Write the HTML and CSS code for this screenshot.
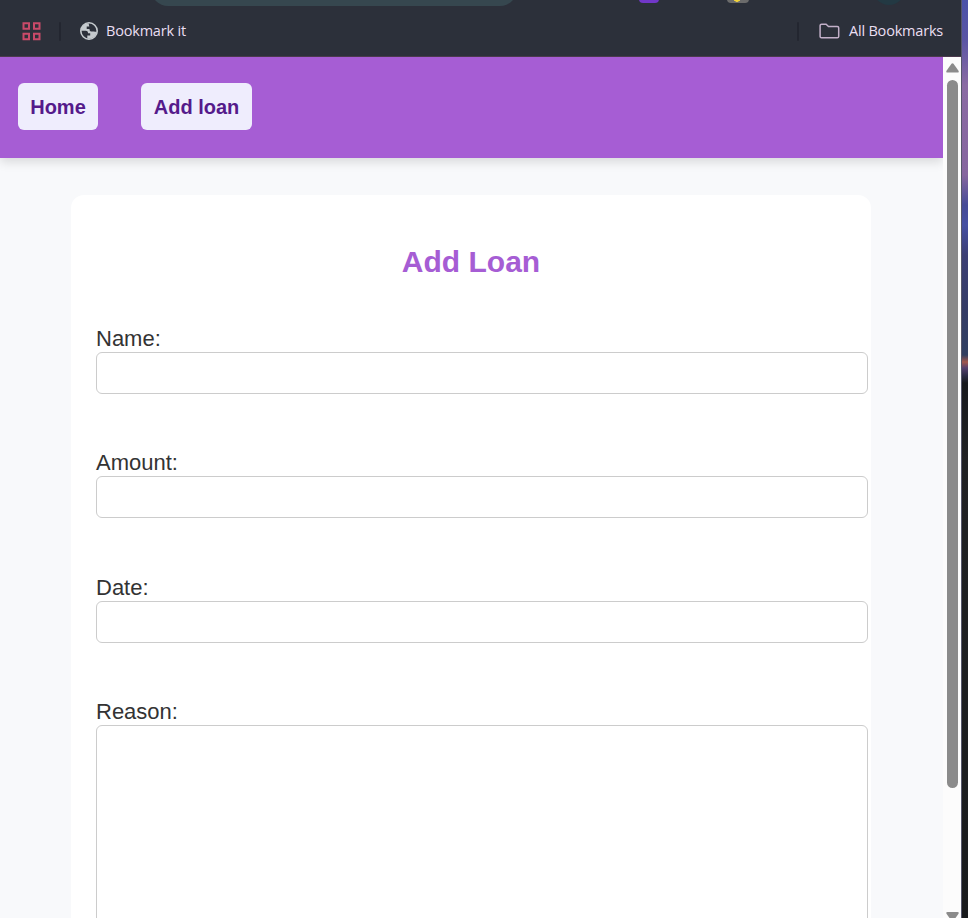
FILE: index.html
```html
<!DOCTYPE html>
<html lang="en">
<head>
<meta charset="utf-8">
<title>Add Loan</title>
<link rel="stylesheet" href="styles.css">
</head>
<body>
<div class="desktop">
  <div class="window">
    <div class="bookmarks">
      <span class="omnibox"></span>
      <span class="ext ext-purple"></span>
      <span class="ext ext-gray"></span>
      <span class="ext ext-teal"></span>
      <svg class="apps" width="20" height="20" viewBox="0 0 20 20" fill="none" stroke="#c94a69" stroke-width="2"><path d="M1.500 2.200h5.500v5.500H1.500zM12 2.200h5.500v5.500h-5.500zM1.500 12.700h5.500v5.500H1.500zM12 12.700h5.500v5.500h-5.500z"/></svg>
      <span class="divider"></span>
      <svg class="globe" width="18" height="18" viewBox="0 0 18 18"><circle cx="9" cy="9" r="8.2" fill="#2c303a" stroke="#c5cace" stroke-width="1.6"/><path fill="#c5cace" d="M8.6 1.2C4.4 1.2 1.2 4.600 1.200 8.800h4.500c1.900 0 2.300 1.400 2.300 2.400h2.200v2.400H7.300v2.900c5.300 1.200 9.300-2.700 9.400-6.900-1.200.5-1.700-.2-2.700-.2h-2.800c-1.200 0-1.700-1-1.700-2.500H6.700V4.600h2.600z"/></svg>
      <span class="bm-text">Bookmark it</span>
      <span class="divider divider-end"></span>
      <svg class="folder" width="21" height="16" viewBox="0 0 21 16" fill="none" stroke="#c3b0c9" stroke-width="1.500"><path d="M2.600 1.300h4.500l2.400 2.200h8.700c1 0 1.500.5 1.500 1.300v8.600c0 .9-.5 1.300-1.400 1.300H2.500c-.9 0-1.400-.4-1.400-1.300V2.600c0-.9.5-1.300 1.500-1.300z"/></svg>
      <span class="bm-text bm-all">All Bookmarks</span>
    </div>
    <div class="viewport">
      <div class="page">
        <nav class="nav">
          <a class="nav-link">Home</a>
          <a class="nav-link nav-add">Add loan</a>
        </nav>
        <main class="card">
          <h1 class="title">Add Loan</h1>
          <form class="form">
            <div class="field"><label class="label" for="name">Name:</label><input class="input" id="name"></div>
            <div class="field"><label class="label" for="amount">Amount:</label><input class="input" id="amount"></div>
            <div class="field"><label class="label" for="date">Date:</label><input class="input" id="date"></div>
            <div class="field"><label class="label" for="reason">Reason:</label><textarea class="input reason" id="reason"></textarea></div>
          </form>
        </main>
      </div>
      <div class="scrollbar">
        <svg class="arrow" width="13" height="10" viewBox="0 0 13 10"><path fill="#8b8b8b" d="M5.500.7q1-1.100 2 0l5 7q.8 1.800-1 1.800h-10Q-.3 9.500.5 7.700z"/></svg>
        <span class="thumb"></span>
        <svg class="arrow" width="13" height="10" viewBox="0 0 13 10"><path fill="#8b8b8b" d="M5.500 8.800q1 1.100 2 0l5-7Q13.300 0 11.500 0h-10Q-.3 0 .5 1.800z"/></svg>
      </div>
    </div>
  </div>
  <div class="wallpaper"></div>
</div>
</body>
</html>
```
FILE: styles.css
```css
body {
  margin: 0;
  overflow: hidden;
  font-family: "Liberation Sans", Arial, sans-serif;
}

.desktop {
  display: grid;
  grid-template-columns: 961px 7px;
  height: 918px;
  overflow: hidden;
}

.window {
  display: flex;
  flex-direction: column;
  height: 918px;
  overflow: hidden;
}

/* Browser chrome */
.bookmarks {
  position: relative;
  display: flex;
  align-items: center;
  flex: none;
  box-sizing: border-box;
  height: 57px;
  padding: 6px 18px 0 22px;
  border-bottom: 1px solid #4b3a4d;
  background: #2c303a;
  overflow: hidden;
}

.omnibox {
  position: absolute;
  top: -28px;
  left: 151px;
  width: 366px;
  height: 34px;
  border-radius: 17px;
  background: #36474f;
}

.ext {
  position: absolute;
  top: -17px;
  height: 20px;
  border-radius: 4px;
}

.ext-purple {
  left: 639px;
  width: 20px;
  background: #7137c8;
}

.ext-gray {
  left: 727px;
  width: 22px;
  background: radial-gradient(circle at 10px 15px, #f2d43c 3.500px, #6b6b6b 4px);
}

.ext-teal {
  top: -27px;
  left: 873px;
  width: 32px;
  height: 32px;
  border-radius: 50%;
  background: #233943;
}

.divider {
  width: 2px;
  height: 19px;
  margin: 0 19px 0 17px;
  border-radius: 1px;
  background: #232630;
}

.divider-end {
  margin: 0 20px 0 auto;
}

.globe {
  margin-right: 8px;
}

.folder {
  margin-right: 9px;
}

.bm-text {
  width: 80px;
  color: #eadff2;
  font: 14.500px/20px "Open Sans", "Noto Sans", sans-serif;
  letter-spacing: -0.200px;
  white-space: nowrap;
}

.bm-all {
  width: 94px;
}

/* Page */
.viewport {
  display: grid;
  grid-template-columns: 943px 18px;
  height: 861px;
}

.page {
  height: 861px;
  overflow: hidden;
  background: #f8f9fb;
}

.nav {
  display: flex;
  gap: 43px;
  box-sizing: border-box;
  height: 101px;
  padding: 26px 18px;
  background: #a65dd4;
  box-shadow: 0 4px 10px rgba(0, 0, 0, 0.130);
}

.nav-link {
  box-sizing: border-box;
  width: 80px;
  height: 47px;
  border-radius: 6px;
  background: #efedfd;
  color: #551a8b;
  font-size: 20px;
  font-weight: bold;
  line-height: 48px;
  text-align: center;
}

.nav-add {
  width: 111px;
}

.card {
  box-sizing: border-box;
  width: 800px;
  height: 900px;
  margin: 37px 0 0 71px;
  padding: 49px 25px 0;
  border-radius: 13px;
  background: #fff;
}

.title {
  margin: 0 0 46px;
  color: #a65dd4;
  font-size: 30px;
  line-height: 36px;
  text-align: center;
}

.field {
  height: 124.400px;
}

.label {
  display: block;
  height: 26px;
  color: #333;
  font-size: 22px;
  line-height: 26px;
}

.input {
  display: block;
  box-sizing: border-box;
  width: 772px;
  height: 42px;
  margin: 0;
  border: 1px solid #ccc;
  border-radius: 6px;
  background: #fff;
  outline: none;
  resize: none;
}

.reason {
  height: 250px;
}

/* Scrollbar */
.scrollbar {
  display: flex;
  flex-direction: column;
  align-items: center;
  padding-top: 6px;
  background: #fcfcfc;
  overflow: hidden;
}

.arrow {
  flex: none;
}

.thumb {
  flex: none;
  width: 11px;
  height: 708px;
  margin: 7px 0 124px;
  border-radius: 6px;
  background: #8b8b8b;
}

.wallpaper {
  border-left: 1px solid #55566a;
  background: linear-gradient(#4b52a8 0, #5a55a4 40px, #8a6ba3 85px, #86669f 175px, #464b96 205px, #4650a2 225px, #3c3f74 255px, #343c66 310px, #303f61 355px, #a2574c 362px, #55406e 368px, #2b2b43 376px, #17191c 383px, #202123 460px, #191b1d 918px);
}
```
